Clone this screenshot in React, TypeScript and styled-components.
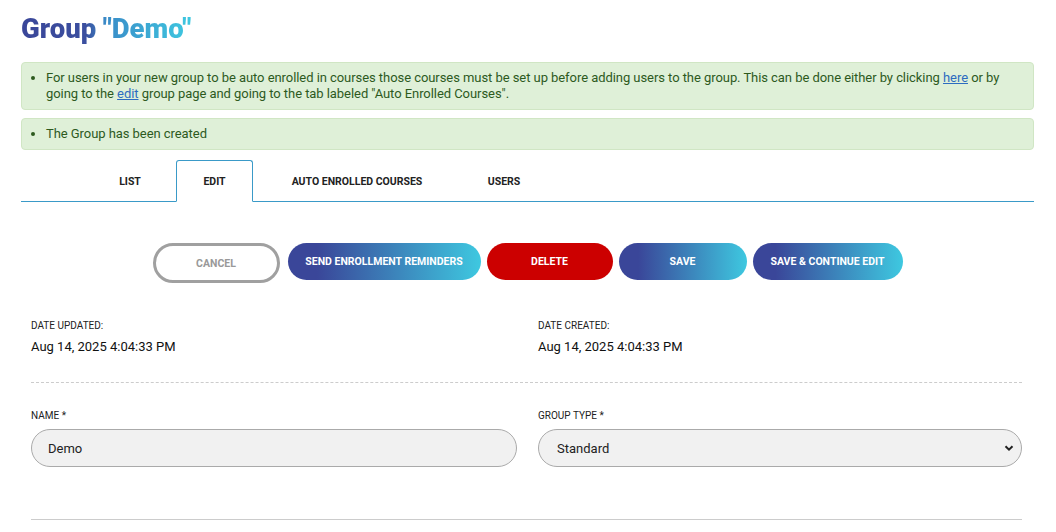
import styled, { createGlobalStyle } from "styled-components";

const GlobalStyle = createGlobalStyle`
  body {
    margin: 0;
    background: #fff;
    font-family: Roboto, "Liberation Sans", sans-serif;
    color: #222;
  }
`;

const Page = styled.div`
  padding: 14px 22px 0 21px;
  width: 1013px;
`;

const Title = styled.h1`
  margin: 0 0 18px;
  font-size: 27.5px;
  font-weight: 900;
  line-height: 30px;
  display: inline-block;
  background: linear-gradient(90deg, #3a4699 0%, #3b4f9f 38%, #3a8cc8 50%, #3ec8e0 100%);
  -webkit-background-clip: text;
  background-clip: text;
  color: transparent;
`;

const Alert = styled.div`
  background: #dff0d8;
  border: 1px solid #d0e6c4;
  border-radius: 4px;
  color: #2d5a1e;
  font-size: 13px;
  letter-spacing: -0.06px;
  line-height: 16px;
  padding: 7px 10px 7px 13px;
  margin-bottom: 8px;

  ul {
    margin: 0;
    padding-left: 11px;
  }

  a {
    color: #2d6cc0;
  }
`;

const Tabs = styled.div`
  display: flex;
  margin-top: 10px;
  padding-left: 63px;
  border-bottom: 1px solid #3a9ac8;
  height: 41px;
`;

const Tab = styled.div<{ $active?: boolean; $w: number }>`
  box-sizing: border-box;
  display: flex;
  align-items: center;
  justify-content: center;
  width: ${(p) => p.$w}px;
  font-size: 10.5px;
  font-weight: 700;
  color: #222;
  margin-bottom: -1px;
  border: 1px solid ${(p) => (p.$active ? "#3a9ac8" : "transparent")};
  border-bottom: ${(p) => (p.$active ? "1px solid #fff" : "none")};
  border-radius: 3px 3px 0 0;
  background: ${(p) => (p.$active ? "#fff" : "transparent")};
`;

const Actions = styled.div`
  display: flex;
  justify-content: center;
  align-items: flex-start;
  gap: 6px;
  margin-top: 41px;
`;

const Button = styled.button<{ $kind?: "cancel" | "danger" | "primary" }>`
  height: 37px;
  border-radius: 19px;
  padding: 0 10px;
  border: none;
  font-family: inherit;
  font-size: 10.5px;
  font-weight: 700;
  color: #fff;
  text-transform: uppercase;
  background: ${(p) =>
    p.$kind === "danger"
      ? "#cc0000"
      : "linear-gradient(90deg, #3a4699 15%, #3ec8e0 100%)"};
  ${(p) =>
    p.$kind === "cancel" &&
    `
    background: #fff;
    border: 3px solid #a0a0a0;
    color: #999;
    height: 40px;
    border-radius: 20px;
    margin-right: 2px;
  `}
`;

const Section = styled.div`
  padding: 0 12px 0 10px;
`;

const Row = styled.div`
  display: grid;
  grid-template-columns: 486px 1fr;
  column-gap: 21px;
`;

const Dates = styled(Row)`
  margin-top: 37px;
  padding-bottom: 28px;
  border-bottom: 1px dashed #ccc;
`;

const Fields = styled(Row)`
  padding-top: 27px;
  padding-bottom: 52px;
  border-bottom: 1px solid #ccc;
`;

const Label = styled.div`
  font-size: 10px;
  color: #222;
  text-transform: uppercase;
  line-height: 12px;
  margin-bottom: 7px;
`;

const Value = styled.div`
  font-size: 13px;
  font-weight: 400;
  color: #111;
`;

const Input = styled.input`
  box-sizing: border-box;
  width: 100%;
  height: 38px;
  border: 1px solid #aaa;
  border-radius: 19px;
  background: #f1f1f1;
  padding: 0 16px;
  font-family: inherit;
  font-size: 13px;
  color: #222;
`;

const Select = styled.div`
  box-sizing: border-box;
  height: 38px;
  border: 1px solid #aaa;
  border-radius: 19px;
  background: #f1f1f1;
  padding: 0 6px 0 18px;
  display: flex;
  align-items: center;
  justify-content: space-between;
  font-size: 13px;
  color: #222;
`;

export default function App() {
  return (
    <Page>
      <GlobalStyle />
      <Title>Group "Demo"</Title>
      <Alert>
        <ul>
          <li>
            For users in your new group to be auto enrolled in courses those courses must be set
            up before adding users to the group. This can be done either by clicking{" "}
            <a href="#">here</a> or by going to the <a href="#">edit</a> group page and going to
            the tab labeled "Auto Enrolled Courses".
          </li>
        </ul>
      </Alert>
      <Alert>
        <ul>
          <li>The Group has been created</li>
        </ul>
      </Alert>
      <Tabs>
        <Tab $w={92}>LIST</Tab>
        <Tab $w={77} $active>EDIT</Tab>
        <Tab $w={208}>AUTO ENROLLED COURSES</Tab>
        <Tab $w={86}>USERS</Tab>
      </Tabs>
      <Actions>
        <Button $kind="cancel" style={{ width: 127 }}>Cancel</Button>
        <Button style={{ width: 193 }}>Send Enrollment Reminders</Button>
        <Button $kind="danger" style={{ width: 126 }}>Delete</Button>
        <Button style={{ width: 128 }}>Save</Button>
        <Button style={{ width: 150 }}>Save &amp; Continue Edit</Button>
      </Actions>
      <Section>
        <Dates>
          <div>
            <Label>Date Updated:</Label>
            <Value>Aug 14, 2025 4:04:33 PM</Value>
          </div>
          <div>
            <Label>Date Created:</Label>
            <Value>Aug 14, 2025 4:04:33 PM</Value>
          </div>
        </Dates>
        <Fields>
          <div>
            <Label>Name *</Label>
            <Input defaultValue="Demo" />
          </div>
          <div>
            <Label>Group Type *</Label>
            <Select>
              <span>Standard</span>
              <svg width="12" height="12" viewBox="0 0 12 12">
                <path d="M2.5 4.2 L6 7.7 L9.5 4.2" fill="none" stroke="#222" strokeWidth="2" />
              </svg>
            </Select>
          </div>
        </Fields>
      </Section>
    </Page>
  );
}
